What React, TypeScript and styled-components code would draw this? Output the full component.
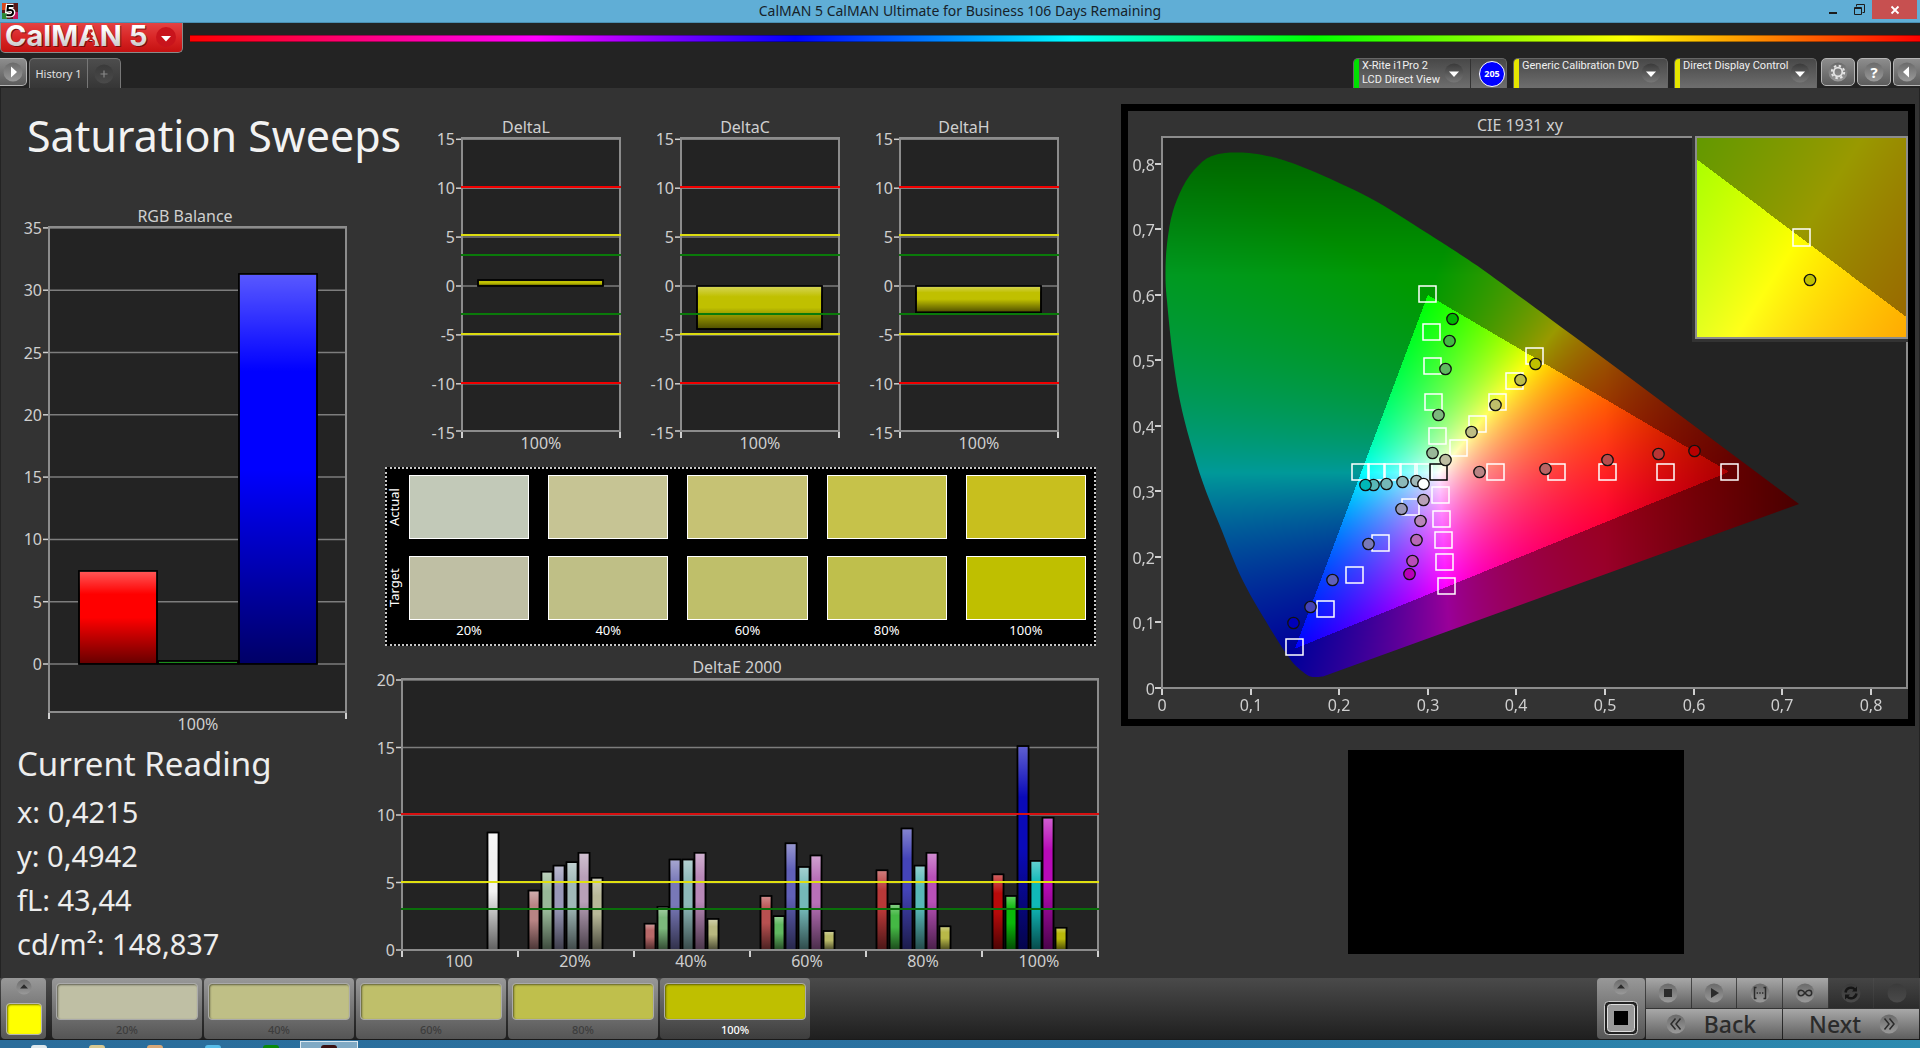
import React, { useLayoutEffect, useRef } from "react";
import styled, { createGlobalStyle, css } from "styled-components";

const GlobalStyle = createGlobalStyle`
  * { box-sizing: border-box; }
  body { margin: 0; background: #333; color: #ededed; font-family: "Noto Sans", "Open Sans", sans-serif; font-size: 16px; }
  button, select { font-family: inherit; }
`;

/* ---------- shell ---------- */

const Shell = styled.div`
  display: flex;
  flex-direction: column;
  min-height: 100vh;
  background: #333;
  overflow: hidden;
`;

const TitleBar = styled.div`
  display: grid;
  grid-template-columns: 160px 1fr 160px;
  height: 23px;
  background: #60aed6;
  border-bottom: 1px solid #4b8fb3;
`;

const AppIcon = styled.svg`
  width: 16px;
  height: 16px;
  margin: 3px 2px;
`;

const WindowTitle = styled.div`
  text-align: center;
  font-size: 14px;
  line-height: 22px;
  color: #16222a;
`;

const WindowButtons = styled.div`
  display: flex;
  justify-content: flex-end;
  padding-right: 3px;
`;

const WindowButton = styled.button<{ $close?: boolean }>`
  display: flex;
  align-items: center;
  justify-content: center;
  width: ${(p) => (p.$close ? 45 : 26)}px;
  height: 19px;
  padding: 0;
  border: 0;
  color: ${(p) => (p.$close ? "#fff" : "#1c1c1c")};
  background: ${(p) => (p.$close ? "#c75050" : "transparent")};
`;

const Header = styled.header`
  background: #232323;
  height: 65px;
`;

const BrandRow = styled.div`
  display: flex;
  align-items: flex-start;
  gap: 7px;
  height: 35px;
`;

const Brand = styled.button`
  display: flex;
  flex: none;
  width: 183px;
  height: 30px;
  padding: 0;
  border: 1px solid #8a8a8a;
  border-top: 0;
  border-radius: 0 0 5px 5px;
  background: linear-gradient(#e34343, #d92626 50%, #c41010);
`;

const Spectrum = styled.div`
  flex: 1;
  height: 7px;
  margin-top: 12px;
  border: solid rgba(0, 0, 0, 0.35);
  border-width: 1px 0;
  background: linear-gradient(90deg, #f00, #f0f 20%, #00f 35%, #0ff 51%, #0f0 65%, #ff0 83%, #f00);
`;

const TabRow = styled.div`
  display: flex;
  align-items: flex-start;
  height: 30px;
`;

const bevel = css`
  border: 1px solid #b5b5b5;
  border-radius: 5px;
  background: linear-gradient(#8d8d8d, #5c5c5c);
`;

const SquareButton = styled.button<{ $edge?: "left" | "right" }>`
  ${bevel}
  display: flex;
  align-items: center;
  justify-content: center;
  flex: none;
  width: ${(p) => (p.$edge ? 27 : 34)}px;
  height: 28px;
  padding: 0;
  ${(p) => p.$edge === "left" && "border-left: 0; border-radius: 0 5px 5px 0;"}
  ${(p) => p.$edge === "right" && "border-right: 0; border-radius: 5px 0 0 5px;"}
`;

const Tabs = styled.div`
  display: flex;
  height: 30px;
  margin-left: 2px;
  border: 1px solid #777;
  border-bottom: 0;
  border-radius: 5px 5px 0 0;
  background: linear-gradient(#4d4d4d, #363636);
`;

const HistoryTab = styled.button`
  width: 58px;
  padding: 0;
  border: 0;
  border-right: 1px solid #777;
  background: none;
  color: #e0e0e0;
  font-size: 11px;
  white-space: nowrap;
`;

const AddTab = styled.button`
  width: 32px;
  padding: 4px 0 0;
  border: 0;
  background: none;
`;

const Spacer = styled.div`
  flex: 1;
`;

const DeviceBar = styled.div`
  display: flex;
  gap: 6px;
`;

const Device = styled.div<{ $width: number; $strip: string }>`
  display: flex;
  width: ${(p) => p.$width}px;
  height: 30px;
  overflow: hidden;
  border: 1px solid #666;
  border-bottom: 0;
  border-radius: 5px 5px 0 0;
  background: linear-gradient(#484848, #6e6e6e);
  &::before {
    content: "";
    flex: none;
    width: 5px;
    background: ${(p) => p.$strip};
  }
`;

const DeviceMenu = styled.button`
  display: flex;
  flex: 1;
  min-width: 0;
  justify-content: space-between;
  padding: 0 6px 0 3px;
  border: 0;
  background: none;
  color: #f0f0f0;
  text-align: left;
  font-family: Roboto, "Noto Sans", sans-serif;
  font-size: 11px;
  line-height: 14px;
  white-space: nowrap;
  svg {
    flex: none;
    margin-top: 4px;
  }
`;

const MeterCount = styled.div`
  display: flex;
  flex: none;
  align-items: center;
  width: 36px;
  padding-left: 8px;
  border-left: 1px solid #333;
  span {
    width: 26px;
    height: 26px;
    border: 1px solid #fff;
    border-radius: 50%;
    background: #00f;
    color: #fff;
    font-size: 9px;
    font-weight: 700;
    line-height: 24px;
    text-align: center;
  }
`;

const HeaderButtons = styled.div`
  display: flex;
  gap: 2px;
  margin-left: 4px;
`;

/* ---------- workspace ---------- */

const Workspace = styled.main`
  display: grid;
  grid-template-columns: 370fr 750fr 800fr;
  flex: 1;
  background: #333;
  box-shadow: inset 1px 0 #232323, inset -1px 0 #232323;
`;

const Column = styled.section`
  display: flex;
  flex-direction: column;
  min-width: 0;
`;

const PageTitle = styled.h1`
  margin: 20px 0 0 27px;
  font-size: 43px;
  line-height: 56px;
  font-weight: 400;
  color: #f2f2f2;
  white-space: nowrap;
`;

const Chart = styled.svg`
  display: block;
  width: 100%;
  height: auto;
  overflow: visible;
  font-size: 16px;
  fill: #cfcfcf;
`;

const BalanceBox = styled.div`
  margin-top: 36px;
`;

const Readings = styled.div`
  padding: 2px 0 0 17px;
  h2 {
    margin: 0 0 2px;
    font-size: 33px;
    line-height: 44px;
    font-weight: 400;
  }
  p {
    margin: 0;
    padding-top: 4px;
    font-size: 29px;
    line-height: 40px;
  }
`;

const DeltaRow = styled.div`
  display: grid;
  grid-template-columns: repeat(3, 1fr);
  padding: 24px 48px 0 45px;
`;

const SwatchPanel = styled.div`
  display: grid;
  grid-template-columns: 3px repeat(5, 1fr);
  grid-template-rows: 64px 64px 20px;
  gap: 17px 19px;
  height: 179px;
  margin: 7px 24px 0 15px;
  padding: 6px 8px 0 0;
  border: 2px dotted #c8c8c8;
  background: #000;
`;

const SideLabel = styled.div`
  width: 18px;
  margin-left: -2px;
  writing-mode: vertical-rl;
  transform: rotate(180deg);
  text-align: center;
  font-size: 13px;
  font-weight: 400;
  line-height: 18px;
  color: #fff;
`;

const Swatch = styled.div<{ $color: string }>`
  border: 1px solid #fff;
  background: ${(p) => p.$color};
`;

const SwatchLabel = styled.div`
  margin-top: -16px;
  text-align: center;
  font-size: 13px;
  font-weight: 400;
  line-height: 18px;
  color: #fff;
`;

const ErrorBox = styled.div`
  margin-top: 9px;
`;

const CiePanel = styled.div`
  margin: 16px 5px 0 1px;
  border: 7px solid #000;
  background: #333;
`;

const Preview = styled.div`
  width: 336px;
  height: 204px;
  margin: 24px 0 0 228px;
  background: #000;
`;

/* ---------- bottom ---------- */

const Footer = styled.footer`
  display: flex;
  height: 62px;
  background: linear-gradient(#4a4a4a, #1f1f1f);
  border-bottom: 1px solid #1a1a1a;
`;

const key = css`
  display: flex;
  flex-direction: column;
  align-items: center;
  padding: 0;
  border: 0;
  border-radius: 4px;
  background: linear-gradient(#989898, #555);
`;

const CurrentKey = styled.button<{ $wide?: boolean }>`
  ${key}
  width: ${(p) => (p.$wide ? 48 : 45)}px;
  margin: 0 ${(p) => (p.$wide ? 1 : 6)}px 0 1px;
  justify-content: space-between;
  padding: 1px 0 4px;
`;

const CurrentColor = styled.span`
  width: 36px;
  height: 32px;
  border: 1px solid #b5b5b5;
  border-radius: 4px;
  background: #ff0;
  box-shadow: inset 1px 1px 2px #777700;
`;

const PatternList = styled.div`
  display: flex;
  gap: 2px;
`;

const PatternKey = styled.button<{ $active?: boolean }>`
  ${key}
  width: 150px;
  padding-top: 5px;
  background: ${(p) => (p.$active ? "linear-gradient(#7b7b7b, #3d3d3d)" : "linear-gradient(#989898, #555)")};
  color: ${(p) => (p.$active ? "#fff" : "#3d3d3d")};
  font-size: 11px;
  font-weight: 500;
  line-height: 18px;
`;

const PatternColor = styled.span<{ $color: string }>`
  width: 142px;
  height: 38px;
  margin-bottom: 1px;
  border: 1px solid #aaa;
  border-radius: 4px;
  background: ${(p) => p.$color};
  box-shadow: inset 1px 1px 2px rgba(0, 0, 0, 0.5);
`;

const Transport = styled.div`
  display: grid;
  grid-template-columns: repeat(6, 1fr);
  grid-template-rows: 30px 30px;
  gap: 1px;
  width: 273px;
  margin-right: 1px;
`;

const TransportButton = styled.button<{ $off?: boolean; $span?: number; $lean?: "left" | "right" }>`
  display: flex;
  align-items: center;
  justify-content: center;
  gap: 18px;
  grid-column: span ${(p) => p.$span ?? 1};
  padding: 0 ${(p) => (p.$lean === "left" ? 6 : 0)}px 0 ${(p) => (p.$lean === "right" ? 6 : 0)}px;
  border: 0;
  background: ${(p) => (p.$off ? "linear-gradient(#454545, #2c2c2c)" : "linear-gradient(#a8a8a8, #5e5e5e)")};
  color: #2b2b2b;
  font-size: 23px;
  line-height: 30px;
  font-weight: 500;
`;

const TaskBar = styled.div`
  display: flex;
  align-items: flex-end;
  height: 8px;
  padding-left: 10px;
  background: linear-gradient(90deg, #2b6d9b, #2a73a2 60%, #2d8bb0);
`;

const TaskSlot = styled.div<{ $color?: string; $active?: boolean }>`
  width: 58px;
  height: 7px;
  display: flex;
  justify-content: center;
  align-items: flex-end;
  ${(p) => p.$active && "background: #7fa9c4; border: 1px solid #dbe8f0; border-bottom: 0;"}
  &::after {
    content: "";
    width: 16px;
    height: 3px;
    border-radius: 8px 8px 0 0;
    background: ${(p) => p.$color ?? "transparent"};
  }
`;

/* ---------- small icons ---------- */

type RoundProps = { children?: React.ReactNode; size?: number; dark?: boolean; id: string };

function Round({ children, size = 20, dark, id }: RoundProps) {
  const from = dark ? "#3a3a3a" : "#6a6a6a";
  const to = dark ? "#4a4a4a" : "#9a9a9a";
  return (
    <svg width={size} height={size} viewBox="0 0 20 20" aria-hidden="true">
      <defs>
        <linearGradient id={id} x1="0" y1="0" x2="0" y2="1">
          <stop offset="0" stopColor={from} />
          <stop offset="1" stopColor={to} />
        </linearGradient>
      </defs>
      <circle cx="10" cy="10" r="9.5" fill={`url(#${id})`} />
      {children}
    </svg>
  );
}

function DownArrow({ id }: { id: string }) {
  return (
    <svg width="20" height="20" viewBox="0 0 20 20" aria-hidden="true">
      <defs>
        <linearGradient id={id} x1="0" y1="0" x2="0" y2="1">
          <stop offset="0" stopColor="#3a3a3a" />
          <stop offset="1" stopColor="#777" />
        </linearGradient>
      </defs>
      <circle cx="10" cy="10" r="9.5" fill={`url(#${id})`} />
      <path d="M5 8.5h10L10 14z" fill="#fff" />
    </svg>
  );
}

/* ---------- chart parts ---------- */

function Shading() {
  return (
    <defs>
      <linearGradient id="shade" x1="0" y1="0" x2="0" y2="1">
        <stop offset="0" stopColor="#fff" stopOpacity="0.35" />
        <stop offset="0.25" stopColor="#fff" stopOpacity="0" />
        <stop offset="0.5" stopColor="#000" stopOpacity="0" />
        <stop offset="1" stopColor="#000" stopOpacity="0.6" />
      </linearGradient>
    </defs>
  );
}

type BarProps = { x: number; y: number; w: number; h: number; color: string };

const Bar = ({ x, y, w, h, color }: BarProps) => (
  <g stroke="#000" strokeWidth="1.5">
    <rect x={x} y={y} width={w} height={h} fill={color} />
    <rect x={x} y={y} width={w} height={h} fill="url(#shade)" />
  </g>
);

type AxisProps = {
  left: number;
  right: number;
  top: number;
  bottom: number;
  ticks: number[];
  toY: (v: number) => number;
};

const AxisGrid = ({ left, right, top, bottom, ticks, toY }: AxisProps) => (
  <g>
    <rect x={left} y={top} width={right - left} height={bottom - top} fill="#232323" />
    {ticks.map((t) => (
      <g key={t}>
        <path d={`M${left} ${Math.min(toY(t), bottom)}H${right}`} stroke="#7d7d7d" strokeWidth="1.5" />
        <path d={`M${left - 6} ${Math.min(toY(t), bottom)}H${left}`} stroke="#d0d0d0" strokeWidth="1.5" />
        <text x={left - 7} y={Math.round(toY(t)) + 6} textAnchor="end">
          {t}
        </text>
      </g>
    ))}
    <rect x={left} y={top} width={right - left} height={bottom - top} fill="none" stroke="#8c8c8c" strokeWidth="2" />
  </g>
);

const Limit = ({ y, left, right, color }: { y: number; left: number; right: number; color: string }) => (
  <path d={`M${left - 1} ${y}H${right + 1}`} stroke={color} strokeWidth="2" />
);

function BalanceChart() {
  const toY = (v: number) => 464 - v * 12.46;
  return (
    <Chart viewBox="0 0 370 540" role="img" aria-label="RGB Balance">
      <Shading />
      <text x="185" y="22" textAnchor="middle">RGB Balance</text>
      <AxisGrid left={49} right={346} top={27} bottom={512} ticks={[35, 30, 25, 20, 15, 10, 5, 0]} toY={toY} />
      <Bar x={79} y={371} w={78} h={93} color="#f00" />
      <Bar x={158} y={461} w={80} h={3} color="#1c8c1c" />
      <Bar x={239} y={74} w={78} h={390} color="#00f" />
      <path d="M49 513v6M346 513v6" stroke="#d0d0d0" strokeWidth="2" />
      <text x="198" y="530" textAnchor="middle">100%</text>
    </Chart>
  );
}

function DeltaChart({ name, value }: { name: string; value: number }) {
  const toY = (v: number) => 174 - v * 9.78;
  const left = 47;
  const right = 205;
  return (
    <Chart viewBox="0 0 219 348" role="img" aria-label={name}>
      <text x="111" y="21" textAnchor="middle">{name}</text>
      <AxisGrid left={left} right={right} top={26} bottom={319} ticks={[15, 10, 5, 0, -5, -10, -15]} toY={toY} />
      <Bar x={63} y={toY(Math.max(value, 0))} w={125} h={Math.abs(value) * 9.78} color="#c0c000" />
      <Limit y={75} left={left} right={right} color="#f00000" />
      <Limit y={123} left={left} right={right} color="#dcdc10" />
      <Limit y={143} left={left} right={right} color="#0a7a0a" />
      <Limit y={202} left={left} right={right} color="#0a7a0a" />
      <Limit y={222} left={left} right={right} color="#dcdc10" />
      <Limit y={271} left={left} right={right} color="#f00000" />
      <path d={`M${left} 320v6M${right} 320v6`} stroke="#d0d0d0" strokeWidth="2" />
      <text x="126" y="337" textAnchor="middle">100%</text>
    </Chart>
  );
}

type ErrorGroup = { label: string; values: number[]; colors: string[]; slot?: number };

const ERROR_GROUPS: ErrorGroup[] = [
  { label: "100", values: [8.7], colors: ["#f2f2f2"], slot: 6 },
  { label: "20%", values: [4.4, 5.8, 6.25, 6.5, 7.2, 5.35], colors: ["#b88484", "#98b898", "#9898b8", "#a0b8b8", "#b8a0b8", "#b8b898"] },
  { label: "40%", values: [1.95, 3.2, 6.7, 6.7, 7.2, 2.3], colors: ["#b86868", "#7cb87c", "#7878b8", "#8cb8b8", "#b888b8", "#b8b880"] },
  { label: "60%", values: [4, 2.5, 7.9, 6.15, 7, 1.4], colors: ["#b85050", "#60b860", "#6060b8", "#74b8b8", "#b870b8", "#b8b868"] },
  { label: "80%", values: [5.9, 3.4, 9, 6.25, 7.2, 1.75], colors: ["#b83838", "#44b844", "#4444b8", "#58b8b8", "#b850b8", "#b8b848"] },
  { label: "100%", values: [5.6, 4, 15.1, 6.6, 9.8, 1.65], colors: ["#b80a0a", "#0ab80a", "#0a0ab8", "#10b8b8", "#b80ab8", "#b8b80a"] },
];

function ErrorChart() {
  const toY = (v: number) => 295 - v * 13.5;
  const left = 32;
  const right = 728;
  return (
    <Chart viewBox="0 0 750 323" role="img" aria-label="DeltaE 2000">
      <text x="367" y="18" textAnchor="middle">DeltaE 2000</text>
      <AxisGrid left={left} right={right} top={24} bottom={295} ticks={[20, 15, 10, 5, 0]} toY={toY} />
      {ERROR_GROUPS.map((g, i) => (
        <g key={g.label}>
          {g.values.map((v, n) => (
            <Bar
              key={n}
              x={Math.round(left + i * 116 + 10 + (n + (g.slot ?? 0)) * 12.57) + 0.5}
              y={toY(v)}
              w={11}
              h={v * 13.5}
              color={g.colors[n]}
            />
          ))}
          <text x={left + i * 116 + 57} y="312" textAnchor="middle">{g.label}</text>
        </g>
      ))}
      <path d={`M${left} 295H${right}`} stroke="#8c8c8c" strokeWidth="2" />
      {[0, 1, 2, 3, 4, 5, 6].map((i) => (
        <path key={i} d={`M${left + i * 116} 296v6`} stroke="#d0d0d0" strokeWidth="2" />
      ))}
      <Limit y={159} left={left} right={right} color="#d81010" />
      <Limit y={227} left={left} right={right} color="#e0e010" />
      <Limit y={254} left={left} right={right} color="#0a6e0a" />
    </Chart>
  );
}

/* ---------- chromaticity chart ---------- */

const PLOT_W = 746;
const PLOT_H = 551;
const X_UNIT = 886;
const Y_UNIT = 655;

const LOCUS: [number, number][] = [
  [63, 16], [77, 15.5], [91, 16.5], [108, 19.5], [121, 23], [148, 33], [208, 61], [265, 96], [315, 128.5], [448, 226], [637, 367],
];
const LOCUS_LEFT: [number, number][] = [
  [161, 539.5], [154, 540], [147, 539], [134, 529], [126, 519], [111, 496], [81, 444], [58, 389], [41, 346], [28, 304], [18, 264],
  [11, 221], [5, 164], [3.5, 137], [5, 107], [11, 74], [24, 44], [39, 26], [50, 19],
];

const inGamut = (x: number, y: number) => {
  const side = (ax: number, ay: number, bx: number, by: number) => (bx - ax) * (y - ay) - (by - ay) * (x - ax);
  return side(0.15, 0.06, 0.64, 0.33) >= 0 && side(0.64, 0.33, 0.3, 0.6) >= 0 && side(0.3, 0.6, 0.15, 0.06) >= 0;
};

function chroma(x: number, y: number): [number, number, number] {
  const yy = Math.max(y, 0.005);
  const X = x / yy;
  const Z = (1 - x - y) / yy;
  const r = Math.max(0, 3.2406 * X - 1.5372 - 0.4986 * Z);
  const g = Math.max(0, -0.9689 * X + 1.8758 + 0.0415 * Z);
  const b = Math.max(0, 0.0557 * X - 0.204 + 1.057 * Z);
  const top = Math.max(r, g, b) || 1;
  const redFade = Math.min(1, Math.max(0.48, 1 - (x - 0.5) * 2.4));
  const greenFade = Math.min(1, Math.max(0.66, 1 - (y - 0.63) * 1.8));
  const k = (255 / top) * redFade * greenFade * (inGamut(x, y) ? 1 : 0.6);
  return [r * k, g * k, b * k];
}

function paint(canvas: HTMLCanvasElement, x0: number, x1: number, y0: number, y1: number, outline: boolean) {
  const ctx = canvas.getContext("2d");
  if (!ctx) return;
  const { width, height } = canvas;
  const image = ctx.createImageData(width, height);
  for (let j = 0; j < height; j++) {
    for (let i = 0; i < width; i++) {
      const x = x0 + ((i + 0.5) / width) * (x1 - x0);
      const y = y1 - ((j + 0.5) / height) * (y1 - y0);
      const [r, g, b] = chroma(x, y);
      const o = (j * width + i) * 4;
      image.data[o] = r;
      image.data[o + 1] = g;
      image.data[o + 2] = b;
      image.data[o + 3] = 255;
    }
  }
  ctx.putImageData(image, 0, 0);
  if (!outline) return;
  const pts = [...LOCUS, ...LOCUS_LEFT];
  const n = pts.length;
  ctx.globalCompositeOperation = "destination-in";
  ctx.beginPath();
  ctx.moveTo(pts[0][0], pts[0][1]);
  const tip = LOCUS.length - 1;
  for (let i = 0; i < n; i++) {
    const p0 = pts[(i - 1 + n) % n];
    const p1 = pts[i];
    const p2 = pts[(i + 1) % n];
    const p3 = pts[(i + 2) % n];
    if (i === tip || i + 1 === tip) {
      ctx.lineTo(p2[0], p2[1]);
    } else {
      const t0 = i === tip + 1 ? [(p2[0] - p1[0]) / 6, (p2[1] - p1[1]) / 6] : [(p2[0] - p0[0]) / 6, (p2[1] - p0[1]) / 6];
      const t1 = [(p3[0] - p1[0]) / 6, (p3[1] - p1[1]) / 6];
      const cap = (v: number, max: number) => Math.max(-max, Math.min(max, v));
      const lx = Math.abs(p2[0] - p1[0]) / 2 + 1;
      const ly = Math.abs(p2[1] - p1[1]) / 2 + 1;
      ctx.bezierCurveTo(
        p1[0] + cap(t0[0], lx), p1[1] + cap(t0[1], ly),
        p2[0] - cap(t1[0], lx), p2[1] - cap(t1[1], ly),
        p2[0], p2[1]
      );
    }
  }
  ctx.closePath();
  ctx.fill();
}

const FillCanvas = styled.canvas`
  display: block;
`;

type FieldProps = { w: number; h: number; range: [number, number, number, number]; outline?: boolean };

function ColorField({ w, h, range, outline = false }: FieldProps) {
  const ref = useRef<HTMLCanvasElement>(null);
  useLayoutEffect(() => {
    if (ref.current) paint(ref.current, ...range, outline);
  }, [range, outline]);
  return <FillCanvas ref={ref} width={w} height={h} />;
}

const MAIN_RANGE: [number, number, number, number] = [0, PLOT_W / X_UNIT, 0, PLOT_H / Y_UNIT];
const INSET_RANGE: [number, number, number, number] = [0.39, 0.45, 0.475, 0.535];

const TARGETS: [number, number][] = [
  [265, 157], [269, 195], [270, 229], [271, 265], [275, 299],
  [372, 219], [352, 244], [335, 265], [315, 287], [296, 311],
  [198, 335], [214, 335], [230, 335], [246, 335], [261, 335],
  [333, 335], [394, 335], [445, 335], [503, 335], [567, 335],
  [278, 358], [279, 382], [281, 403], [282, 425], [284, 449],
  [248, 370], [218, 406], [192, 438], [163, 472], [132, 510],
];

const READINGS: [number, number, string][] = [
  [290, 182, "#00b800"], [287, 204, "#44b844"], [283, 232, "#60b860"], [276, 278, "#7cb87c"], [270, 316, "#98b898"],
  [373, 227, "#c0c000"], [358, 243, "#bebe4a"], [333, 268, "#bebe6a"], [309, 295, "#bebe84"], [283, 323, "#bebea2"],
  [317, 335, "#b88484"], [383, 332, "#b86464"], [445, 323, "#b84c4c"], [496, 317, "#b83434"], [532, 314, "#b80000"],
  [211, 348, "#58b8b8"], [203, 348, "#00b8b8"], [224, 347, "#74b8b8"], [240, 345, "#8cb8b8"], [254, 344, "#a0b8b8"],
  [261, 363, "#b8a0b8"], [258, 384, "#b884b8"], [254, 403, "#b868b8"], [250, 424, "#b84cb8"], [247, 437, "#b800b8"],
  [239, 372, "#9898b8"], [206, 407, "#7878b8"], [170, 443, "#6060b8"], [148, 470, "#4444b8"], [131, 486, "#0000b8"],
  [261, 347, "#ffffff"],
];

const comma = (n: number) => (n === 0 ? "0" : `0,${n}`);

function CieChart() {
  return (
    <Chart viewBox="-34 -26 780 608" role="img" aria-label="CIE 1931 xy">
      <text x="358" y="-6" textAnchor="middle">CIE 1931 xy</text>
      <rect x="0" y="0" width={PLOT_W} height={PLOT_H} fill="#232323" />
      <foreignObject x="0" y="0" width={PLOT_W} height={PLOT_H}>
        <ColorField w={PLOT_W} h={PLOT_H} range={MAIN_RANGE} outline />
      </foreignObject>
      <rect x="0" y="0" width={PLOT_W - 1} height={PLOT_H} fill="none" stroke="#8c8c8c" strokeWidth="2" />
      {[0, 1, 2, 3, 4, 5, 6, 7, 8].map((n) => {
        const x = Math.round(n * 88.6);
        const y = PLOT_H - Math.round(n * 65.5);
        return (
          <g key={n}>
            <path d={`M${x} ${PLOT_H + 1}v6M-1 ${y}h-6`} stroke="#d0d0d0" strokeWidth="2" />
            <text x={x} y={PLOT_H + 23} textAnchor="middle">{comma(n)}</text>
            <text x="-7" y={y + 7} textAnchor="end">{comma(n)}</text>
          </g>
        );
      })}
      {TARGETS.map(([x, y], i) => (
        <rect key={i} x={x - 8} y={y - 8} width="17" height="16" fill="none" stroke="#fff" strokeWidth="1.5" />
      ))}
      <rect x="268" y="327" width="17" height="16" fill="none" stroke="#000" strokeWidth="1.5" />
      {READINGS.map(([x, y, color], i) => (
        <circle key={i} cx={x + 0.5} cy={y} r="5.7" fill={color} stroke="#111" strokeWidth="1.3" />
      ))}
      <rect x="530" y="-3" width="216" height="208" fill="#333" />
      <foreignObject x="534" y="0" width="212" height="201">
        <ColorField w={212} h={201} range={INSET_RANGE} />
      </foreignObject>
      <rect x="534" y="0" width="211" height="201" fill="none" stroke="#8c8c8c" strokeWidth="2" />
      <rect x="631" y="92" width="17" height="17" fill="none" stroke="#fff" strokeWidth="1.5" />
      <circle cx="648" cy="143" r="5.7" fill="#c0c000" stroke="#111" strokeWidth="1.3" />
    </Chart>
  );
}

/* ---------- data ---------- */

const ACTUAL = ["#c2c9b8", "#c6c494", "#c6c274", "#c6c24a", "#c8bf1e"];
const TARGET = ["#bfbfa4", "#bfbf86", "#bfbf6a", "#bfbf4c", "#bfbf00"];
const LEVELS = ["20%", "40%", "60%", "80%", "100%"];

export default function App() {
  return (
    <Shell>
      <GlobalStyle />
      <TitleBar>
        <AppIcon viewBox="0 0 16 16" aria-hidden="true">
          <rect width="16" height="16" fill="#5a1a1a" />
          <path d="M0 0h5v7H0z" fill="#d8481c" />
          <path d="M11 9h5v7h-5z" fill="#c0185c" />
          <path d="M0 10h5v6H0z" fill="#2c8a34" />
          <path d="M11.5 3H6L5.5 7.5c4-1 6 0 5.5 2.5S7 12.5 4.5 12" fill="none" stroke="#fff" strokeWidth="4.5" />
          <path d="M11.5 3H6L5.5 7.5c4-1 6 0 5.5 2.5S7 12.5 4.5 12" fill="none" stroke="#000" strokeWidth="2" />
        </AppIcon>
        <WindowTitle>CalMAN 5 CalMAN Ultimate for Business 106 Days Remaining</WindowTitle>
        <WindowButtons>
          <WindowButton aria-label="Minimize">
            <svg width="10" height="10"><path d="M1 8h8" stroke="currentColor" strokeWidth="2" /></svg>
          </WindowButton>
          <WindowButton aria-label="Restore">
            <svg width="12" height="12" fill="none" stroke="currentColor">
              <path d="M3.5 2.5v-2h8v8h-2M1.5 3.5h7v7h-7zM1.5 4.5h7" />
            </svg>
          </WindowButton>
          <WindowButton $close aria-label="Close">
            <svg width="10" height="10"><path d="M1.5 1.5l7 7M8.5 1.5l-7 7" stroke="currentColor" strokeWidth="1.8" /></svg>
          </WindowButton>
        </WindowButtons>
      </TitleBar>

      <Header>
        <BrandRow>
          <Brand aria-label="CalMAN 5 menu">
            <svg width="181" height="29" viewBox="0 0 181 29">
              <defs>
                <linearGradient id="metal" x1="0" y1="0" x2="0" y2="1">
                  <stop offset="0.3" stopColor="#fff" />
                  <stop offset="1" stopColor="#b8b8b8" />
                </linearGradient>
              </defs>
              <g fontFamily="Inter, sans-serif" fontWeight="700" fontSize="29">
                <text x="5" y="24" fill="#7a0c0c">CalMAN</text>
                <text x="4" y="23" fill="url(#metal)">CalMAN</text>
                <text x="129" y="24" fill="#7a0c0c">5</text>
                <text x="128" y="23" fill="url(#metal)">5</text>
              </g>
              <g stroke="#c01818" fill="none" strokeWidth="1.6">
                <circle cx="90" cy="8" r="1" />
                <path d="M89 10l-3 3M89 10l1 5-4 4M90 15l3 3v4M88 11l4 3" />
              </g>
              <ellipse cx="165" cy="14" rx="10" ry="10" fill="#c8141c" />
              <path d="M160 13h10l-5 5.5z" fill="#fff" />
            </svg>
          </Brand>
          <Spectrum />
        </BrandRow>
        <TabRow>
          <SquareButton $edge="left" aria-label="Expand">
            <Round id="g-expand"><path d="M8 4.5v11l6-5.5z" fill="#fff" /></Round>
          </SquareButton>
          <Tabs>
            <HistoryTab>History 1</HistoryTab>
            <AddTab aria-label="Add history">
              <Round id="g-add" dark><path d="M10 6.5v7M6.5 10h7" stroke="#888" strokeWidth="1.2" /></Round>
            </AddTab>
          </Tabs>
          <Spacer />
          <DeviceBar>
            <Device $width={154} $strip="#00e000">
              <DeviceMenu>
                <span>X-Rite i1Pro 2<br />LCD Direct View</span>
                <DownArrow id="g-meter" />
              </DeviceMenu>
              <MeterCount><span>205</span></MeterCount>
            </Device>
            <Device $width={155} $strip="#e6e600">
              <DeviceMenu>
                <span>Generic Calibration DVD</span>
                <DownArrow id="g-source" />
              </DeviceMenu>
            </Device>
            <Device $width={143} $strip="#e6e600">
              <DeviceMenu>
                <span>Direct Display Control</span>
                <DownArrow id="g-display" />
              </DeviceMenu>
            </Device>
          </DeviceBar>
          <HeaderButtons>
            <SquareButton aria-label="Settings">
              <Round id="g-gear">
                <circle cx="10" cy="10" r="4.3" fill="none" stroke="#e4e4e4" strokeWidth="1.8" />
                <circle cx="10" cy="10" r="6.2" fill="none" stroke="#e4e4e4" strokeWidth="2" strokeDasharray="2.43 2.43" />
              </Round>
            </SquareButton>
            <SquareButton aria-label="Help">
              <Round id="g-help">
                <text x="10" y="15.5" textAnchor="middle" fontSize="15" fontWeight="700" fill="#fff">?</text>
              </Round>
            </SquareButton>
            <SquareButton $edge="right" aria-label="Collapse">
              <Round id="g-collapse"><path d="M12 4.5v11L6 10z" fill="#fff" /></Round>
            </SquareButton>
          </HeaderButtons>
        </TabRow>
      </Header>

      <Workspace>
        <Column>
          <PageTitle>Saturation Sweeps</PageTitle>
          <BalanceBox>
            <BalanceChart />
          </BalanceBox>
          <Readings>
            <h2>Current Reading</h2>
            <p>x: 0,4215</p>
            <p>y: 0,4942</p>
            <p>fL: 43,44</p>
            <p>cd/m²: 148,837</p>
          </Readings>
        </Column>

        <Column>
          <DeltaRow>
            <DeltaChart name="DeltaL" value={0.6} />
            <DeltaChart name="DeltaC" value={-4.4} />
            <DeltaChart name="DeltaH" value={-2.7} />
          </DeltaRow>
          <SwatchPanel>
            <SideLabel>Actual</SideLabel>
            {ACTUAL.map((c) => <Swatch key={c} $color={c} />)}
            <SideLabel>Target</SideLabel>
            {TARGET.map((c) => <Swatch key={c} $color={c} />)}
            <span />
            {LEVELS.map((l) => <SwatchLabel key={l}>{l}</SwatchLabel>)}
          </SwatchPanel>
          <ErrorBox>
            <ErrorChart />
          </ErrorBox>
        </Column>

        <Column>
          <CiePanel>
            <CieChart />
          </CiePanel>
          <Preview />
        </Column>
      </Workspace>

      <Footer>
        <CurrentKey aria-label="Current color">
          <Round id="g-up1" size={16}><path d="M5 12h10l-5-5.5z" fill="#2b2b2b" /></Round>
          <CurrentColor />
        </CurrentKey>
        <PatternList>
          {LEVELS.map((l, i) => (
            <PatternKey key={l} $active={i === 4}>
              <PatternColor $color={TARGET[i]} />
              {l}
            </PatternKey>
          ))}
        </PatternList>
        <Spacer />
        <CurrentKey $wide aria-label="Pattern window">
          <Round id="g-up2" size={16}><path d="M5 12h10l-5-5.5z" fill="#2b2b2b" /></Round>
          <svg width="34" height="34" viewBox="0 0 34 34">
            <rect x="0.5" y="0.5" width="33" height="33" rx="4" fill="#222" stroke="#ccc" />
            <rect x="3.5" y="3.5" width="27" height="27" rx="3" fill="#999" stroke="#ddd" />
            <rect x="10" y="10" width="14" height="14" fill="#000" />
          </svg>
        </CurrentKey>
        <Transport>
          <TransportButton aria-label="Stop">
            <Round id="t1"><path d="M6 6h8v8H6z" fill="#2b2b2b" /></Round>
          </TransportButton>
          <TransportButton aria-label="Play">
            <Round id="t2"><path d="M7 5v10l8-5z" fill="#2b2b2b" /></Round>
          </TransportButton>
          <TransportButton aria-label="Read series">
            <Round id="t3">
              <path d="M6.5 4.5h-2v11h2M13.5 4.5h2v11h-2" fill="none" stroke="#2b2b2b" strokeWidth="1.5" />
              <path d="M6.6 9.2H8v1.6H6.600zM9.300 9.200h1.400v1.600H9.300zM12 9.200h1.400v1.600H12z" fill="#2b2b2b" />
            </Round>
          </TransportButton>
          <TransportButton aria-label="Read continuously">
            <Round id="t4">
              <path d="M10 10c-1.5-2-2.5-2.7-4-2.7a2.7 2.7 0 0 0 0 5.4c1.5 0 2.5-.7 4-2.7 1.5-2 2.5-2.7 4-2.7a2.7 2.7 0 0 1 0 5.4c-1.5 0-2.5-.7-4-2.7z" fill="none" stroke="#2b2b2b" strokeWidth="1.5" />
            </Round>
          </TransportButton>
          <TransportButton $off aria-label="Refresh">
            <Round id="t5" dark>
              <path d="M4.5 9.5A5.5 5.5 0 0 1 14 6.5M15.5 10.5A5.5 5.5 0 0 1 6 13.5" fill="none" stroke="#161616" strokeWidth="2.4" />
              <path d="M16 3.5v5h-5zM4 16.5v-5h5z" fill="#161616" />
            </Round>
          </TransportButton>
          <TransportButton $off aria-label="Record">
            <Round id="t6" dark />
          </TransportButton>
          <TransportButton $span={3} $lean="left">
            <Round id="t7"><path d="M9.5 4.5L5 10l4.5 5.5M14.5 4.5L10 10l4.5 5.5" fill="none" stroke="#2b2b2b" strokeWidth="1.5" /></Round>
            Back
          </TransportButton>
          <TransportButton $span={3} $lean="right">
            Next
            <Round id="t8"><path d="M5.5 4.5L10 10l-4.5 5.5M10.5 4.5L15 10l-4.5 5.5" fill="none" stroke="#2b2b2b" strokeWidth="1.5" /></Round>
          </TransportButton>
        </Transport>
      </Footer>
      <TaskBar>
        <TaskSlot $color="#dfe8ec" />
        <TaskSlot $color="#d8c890" />
        <TaskSlot $color="#d8a878" />
        <TaskSlot $color="#58bce8" />
        <TaskSlot $color="#0a8a0a" />
        <TaskSlot $active $color="#3a1010" />
      </TaskBar>
    </Shell>
  );
}
